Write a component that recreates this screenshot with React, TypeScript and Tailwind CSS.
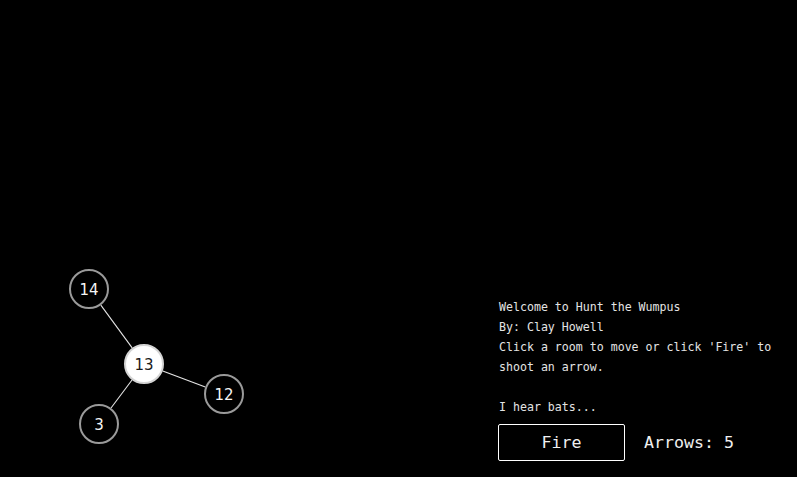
const rooms = [
  { id: 14, x: 89, y: 289, current: false },
  { id: 13, x: 144, y: 364, current: true },
  { id: 12, x: 224, y: 394, current: false },
  { id: 3, x: 99, y: 424, current: false },
];

const links: [number, number][] = [
  [14, 13],
  [13, 12],
  [13, 3],
];

const R = 19;

function Map() {
  const find = (id: number) => rooms.find((r) => r.id === id)!;
  return (
    <svg width={498} height={477} className="shrink-0 block">
      {links.map(([a, b]) => {
        const p = find(a);
        const q = find(b);
        const dx = q.x - p.x;
        const dy = q.y - p.y;
        const d = Math.hypot(dx, dy);
        const ux = dx / d;
        const uy = dy / d;
        return (
          <line
            key={`${a}-${b}`}
            x1={p.x + ux * (R + 1)}
            y1={p.y + uy * (R + 1)}
            x2={q.x - ux * (R + 1)}
            y2={q.y - uy * (R + 1)}
            stroke="#e5e5e5"
            strokeWidth={1.1}
          />
        );
      })}
      {rooms.map((r) => (
        <g key={r.id} className="cursor-pointer">
          <circle
            cx={r.x}
            cy={r.y}
            r={R}
            fill={r.current ? '#ffffff' : '#000000'}
            stroke={r.current ? '#d4d4d4' : '#9a9a9a'}
            strokeWidth={2}
          />
          <text
            x={r.x}
            y={r.y + 5.5}
            textAnchor="middle"
            fontSize={15}
            fontFamily="'DejaVu Sans', sans-serif"
            fill={r.current ? '#1a1a1a' : '#f5f5f5'}
          >
            {r.id}
          </text>
        </g>
      ))}
    </svg>
  );
}

export default function App() {
  return (
    <div
      className="flex h-[477px] w-full overflow-hidden bg-black text-[#e4e4e4]"
      style={{ fontFamily: "'DejaVu Sans Mono', 'Liberation Mono', monospace" }}
    >
      <Map />
      <div className="flex flex-col justify-end pb-[16px]">
        <div className="text-[11.6px] leading-[20px] pl-px">
          <p>Welcome to Hunt the Wumpus</p>
          <p>By: Clay Howell</p>
          <p>Click a room to move or click 'Fire' to</p>
          <p>shoot an arrow.</p>
          <p>&nbsp;</p>
          <p>I hear bats...</p>
        </div>
        <div className="mt-[7px] flex items-center gap-[19px]">
          <button className="h-[37px] w-[127px] rounded-[2px] border border-white bg-black pt-px text-[16.6px] text-[#f0f0f0]">
            Fire
          </button>
          <span className="pt-px text-[16.6px] text-[#f0f0f0]">Arrows: 5</span>
        </div>
      </div>
    </div>
  );
}
